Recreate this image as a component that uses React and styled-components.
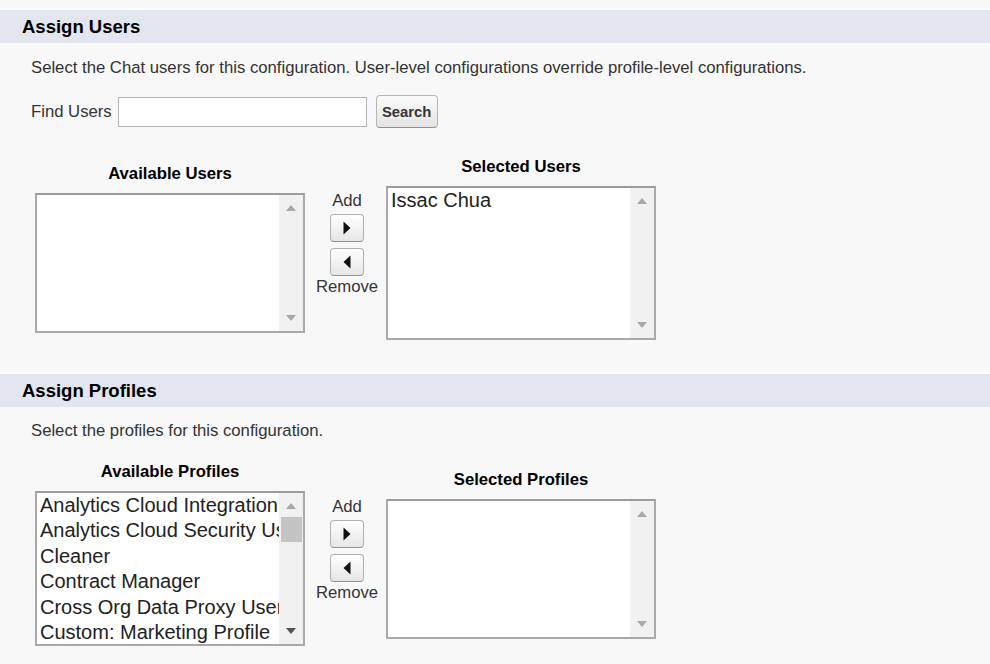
import React from "react";
import styled, { createGlobalStyle } from "styled-components";

const GlobalStyle = createGlobalStyle`
  html, body {
    margin: 0;
    padding: 0;
    background: #f8f8f8;
  }
  body {
    font-family: "Liberation Sans", Arial, sans-serif;
    color: #222;
  }
`;

const availableProfiles = [
  "Analytics Cloud Integration User",
  "Analytics Cloud Security User",
  "Cleaner",
  "Contract Manager",
  "Cross Org Data Proxy User",
  "Custom: Marketing Profile",
];

const App = () => {
  return (
    <Page>
      <GlobalStyle />
      <Section>
        <SectionHeader>Assign Users</SectionHeader>
        <SectionBody bottom={32}>
          <Description top={16}>
            Select the Chat users for this configuration. User-level
            configurations override profile-level configurations.
          </Description>
          <FindRow>
            <FieldLabel>Find Users</FieldLabel>
            <SearchInput type="text" />
            <SearchButton>Search</SearchButton>
          </FindRow>
          <DuelingRow top={30}>
            <ListColumn>
              <ListLabel>Available Users</ListLabel>
              <ListBox height={140} items={[]} />
            </ListColumn>
            <MoveButtons />
            <ListColumn>
              <ListLabel>Selected Users</ListLabel>
              <ListBox height={154} items={["Issac Chua"]} />
            </ListColumn>
          </DuelingRow>
        </SectionBody>
      </Section>

      <Section>
        <SectionHeader>Assign Profiles</SectionHeader>
        <SectionBody bottom={18}>
          <Description top={15}>Select the profiles for this configuration.</Description>
          <DuelingRow top={23}>
            <ListColumn>
              <ListLabel>Available Profiles</ListLabel>
              <ListBox height={155} items={availableProfiles} scrollable />
            </ListColumn>
            <MoveButtons />
            <ListColumn>
              <ListLabel>Selected Profiles</ListLabel>
              <ListBox height={140} items={[]} />
            </ListColumn>
          </DuelingRow>
        </SectionBody>
      </Section>
    </Page>
  );
};

// Add / Remove buttons between the two lists
const MoveButtons = () => (
  <MiddleColumn>
    <MoveLabel>Add</MoveLabel>
    <ArrowButton title="Add">
      <svg width="8" height="14" viewBox="0 0 8 14">
        <path d="M0.5 0.5 L7.5 7 L0.5 13.5 Z" fill="#111" />
      </svg>
    </ArrowButton>
    <ArrowButton title="Remove" second>
      <svg width="8" height="14" viewBox="0 0 8 14">
        <path d="M7.5 0.5 L0.5 7 L7.5 13.5 Z" fill="#111" />
      </svg>
    </ArrowButton>
    <MoveLabel bottom>Remove</MoveLabel>
  </MiddleColumn>
);

const ListBox = ({ height, items, scrollable }) => (
  <Box height={height}>
    <Items>
      {items.map((item) => (
        <Item key={item}>{item}</Item>
      ))}
    </Items>
    <ScrollTrack>
      <ScrollArrow>
        <svg width="10" height="6" viewBox="0 0 10 6">
          <path d="M0 6 L5 0 L10 6 Z" fill="#a8a8a8" />
        </svg>
      </ScrollArrow>
      {scrollable && <ScrollThumb />}
      <Spacer />
      <ScrollArrow>
        <svg width="10" height="6" viewBox="0 0 10 6">
          <path d="M0 0 L5 6 L10 0 Z" fill={scrollable ? "#505050" : "#a8a8a8"} />
        </svg>
      </ScrollArrow>
    </ScrollTrack>
  </Box>
);

export default App;

const Page = styled.div`
  padding-top: 8px;
  width: 990px;
  height: 664px;
  overflow: hidden;
  background: #f8f8f8;
`;

const Section = styled.section`
  border-top: 2px solid #fff;
`;

const SectionHeader = styled.h2`
  margin: 0;
  height: 33px;
  padding-left: 22px;
  display: flex;
  align-items: center;
  background: #e3e6ee;
  font-size: 18.5px;
  font-weight: bold;
  color: #000;
`;

const SectionBody = styled.div`
  padding: 0 0 ${(props) => props.bottom}px 31px;
`;

const Description = styled.p`
  margin: ${(props) => props.top}px 0 0;
  font-size: 16.7px;
  line-height: 18px;
  color: #333;
`;

const FindRow = styled.div`
  margin-top: 18px;
  height: 33px;
  display: flex;
  align-items: center;
`;

const FieldLabel = styled.label`
  font-size: 16.7px;
  color: #333;
  margin-right: 6px;
`;

const SearchInput = styled.input`
  box-sizing: border-box;
  width: 249px;
  height: 30px;
  margin: 1px 0 0;
  border: 1px solid #b4b4b4;
  background: #fff;
  outline: none;
`;

const SearchButton = styled.button`
  box-sizing: border-box;
  margin-left: 9px;
  width: 62px;
  height: 33px;
  padding: 0;
  border: 1px solid #b5b5b5;
  border-bottom-color: #909090;
  border-radius: 4px;
  background: linear-gradient(#fbfbfb, #e4e4e4);
  font-family: "Liberation Sans", Arial, sans-serif;
  font-size: 14.8px;
  font-weight: bold;
  color: #333;
`;

const DuelingRow = styled.div`
  margin-top: ${(props) => props.top}px;
  margin-left: 4px;
  display: flex;
  align-items: center;
`;

const ListColumn = styled.div`
  width: 270px;
  display: flex;
  flex-direction: column;
`;

const ListLabel = styled.div`
  text-align: center;
  font-size: 16.7px;
  line-height: 18px;
  font-weight: bold;
  color: #000;
  margin-bottom: 10px;
`;

const Box = styled.div`
  box-sizing: border-box;
  height: ${(props) => props.height}px;
  border: 2px solid #a9a9a9;
  border-top-color: #9c9c9c;
  background: #fff;
  display: flex;
`;

const Items = styled.div`
  flex: 1;
  min-width: 0;
  overflow: hidden;
  padding: 0 0 0 3px;
`;

const Item = styled.div`
  font-size: 20px;
  line-height: 25.4px;
  white-space: nowrap;
  color: #222;
`;

const ScrollTrack = styled.div`
  width: 24px;
  background: #f1f1f1;
  display: flex;
  flex-direction: column;
  align-items: center;
  padding: 10px 0;
`;

const ScrollArrow = styled.div`
  height: 6px;
  display: flex;
`;

const ScrollThumb = styled.div`
  width: 21px;
  height: 25px;
  margin-top: 8px;
  background: #c4c4c4;
`;

const Spacer = styled.div`
  flex: 1;
`;

const MiddleColumn = styled.div`
  box-sizing: border-box;
  width: 81px;
  padding: 0 0 10px 3px;
  display: flex;
  flex-direction: column;
  align-items: center;
`;

const MoveLabel = styled.div`
  font-size: 16.7px;
  line-height: 18px;
  color: #333;
  margin-bottom: ${(props) => (props.bottom ? 0 : 4)}px;
  margin-top: ${(props) => (props.bottom ? 2 : 0)}px;
`;

const ArrowButton = styled.button`
  box-sizing: border-box;
  width: 34px;
  height: 28px;
  margin-top: ${(props) => (props.second ? 6 : 0)}px;
  padding: 0;
  display: flex;
  align-items: center;
  justify-content: center;
  border: 1px solid #b0b0b0;
  border-bottom-color: #8f8f8f;
  border-radius: 4px;
  background: linear-gradient(#ffffff, #e6e6e6);
`;
